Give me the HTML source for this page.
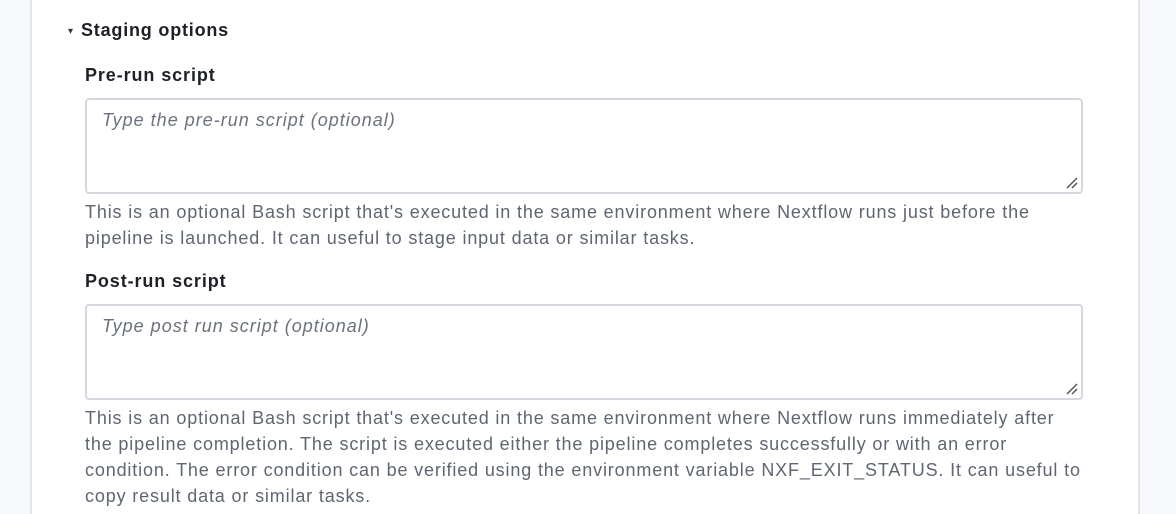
<!DOCTYPE html><html><head><style>
body{margin:0;width:1176px;height:514px;background:#f7f8fa;font-family:"Liberation Sans",sans-serif;overflow:hidden;position:relative}
.panel{position:absolute;left:30px;top:0;width:1106px;height:514px;background:#fff;border-left:2px solid #e1e3e8;border-right:2px solid #e1e3e8}
.t{position:absolute;white-space:nowrap}
.title{left:81px;top:20px;font-size:18px;font-weight:bold;color:#1d2026;letter-spacing:0.8px}
.lbl{left:85px;font-size:18px;font-weight:bold;color:#1d2026;letter-spacing:0.9px}
.ta{position:absolute;left:85px;width:994px;height:92px;border:2px solid #d5d8de;border-radius:4px;background:#fff}
.ph{position:absolute;left:15px;top:10px;font-size:18px;font-style:italic;color:#6b717d;letter-spacing:1px;white-space:nowrap}
.help{left:85px;font-size:18px;color:#5f6672;line-height:26px;letter-spacing:0.85px}
.grip{position:absolute;right:2px;bottom:2px}
</style></head><body>
<div class="panel"></div>
<div class="t" style="left:68px;top:26px;font-size:10px;color:#333">▾</div>
<div class="t title">Staging options</div>
<div class="t lbl" style="top:65px">Pre-run script</div>
<div class="ta" style="top:98px"><div class="ph">Type the pre-run script (optional)</div>
<svg class="grip" width="14" height="14"><path d="M2 12L12 2M7 12L12 7" stroke="#555" stroke-width="1.5"/></svg></div>
<div class="t help" style="top:199px">This is an optional Bash script that's executed in the same environment where Nextflow runs just before the<br>pipeline is launched. It can useful to stage input data or similar tasks.</div>
<div class="t lbl" style="top:271px">Post-run script</div>
<div class="ta" style="top:304px"><div class="ph">Type post run script (optional)</div>
<svg class="grip" width="14" height="14"><path d="M2 12L12 2M7 12L12 7" stroke="#555" stroke-width="1.5"/></svg></div>
<div class="t help" style="top:405px">This is an optional Bash script that's executed in the same environment where Nextflow runs immediately after<br>the pipeline completion. The script is executed either the pipeline completes successfully or with an error<br>condition. The error condition can be verified using the environment variable NXF_EXIT_STATUS. It can useful to<br>copy result data or similar tasks.</div>
</body></html>
